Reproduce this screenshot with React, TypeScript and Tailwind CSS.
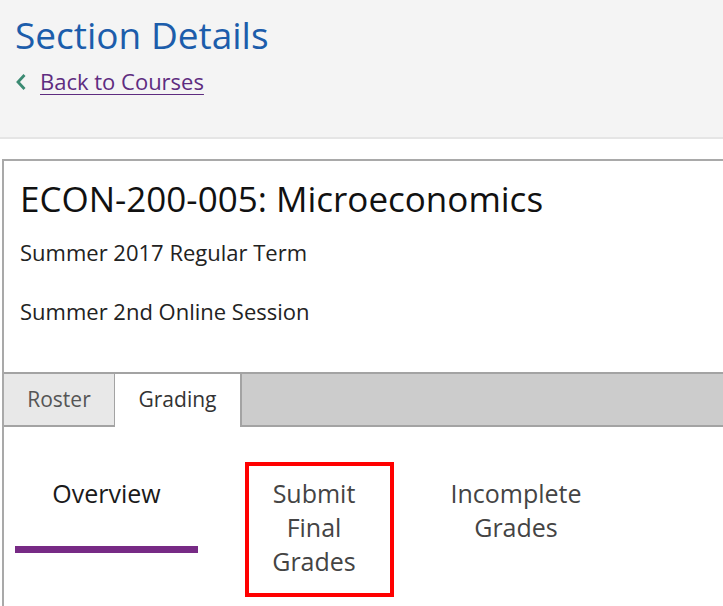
import React from 'react';

const subNav = [
    { label: ['Overview'], active: true, width: 'w-[183px]', ml: 'ml-[11px]' },
    { label: ['Submit', 'Final', 'Grades'], active: false, width: 'w-[232px]', ml: '', highlight: true },
    { label: ['Incomplete', 'Grades'], active: false, width: 'w-[172px]', ml: '' },
];

const App: React.FC = () => {
    return (
        <div className="w-[723px] h-[606px] overflow-hidden bg-white" style={{ fontFamily: '"Open Sans", "Noto Sans", sans-serif' }}>
            {/* page header */}
            <div className="h-[139px] bg-[#f4f4f4] border-b-2 border-[#e5e5e5] pl-[15px] pt-[10px]">
                <h1 className="text-[37px] leading-[50px] text-[#1c5dab]">Section Details</h1>
                <a href="#" className="mt-[7px] flex items-center gap-[13px] text-[22px] leading-[28px]">
                    <svg width="12" height="18" viewBox="0 0 12 18" className="mt-[2px]">
                        <path d="M9.5 2 L3 9 L9.5 16" fill="none" stroke="#3b8a72" strokeWidth="2.8" />
                    </svg>
                    <span className="text-[#5e2c80] underline decoration-1 underline-offset-4">Back to Courses</span>
                </a>
            </div>

            {/* section card */}
            <div className="mt-[20px] ml-[2px] w-[740px] border-2 border-[#a9a9a9]">
                <div className="pl-[16px] pt-[14px]">
                    <h2 className="text-[35px] leading-[48px] text-[#111]">ECON-200-005: Microeconomics</h2>
                    <p className="mt-[15px] text-[22px] leading-[28px] text-[#222]">Summer 2017 Regular Term</p>
                    <p className="mt-[31px] text-[22px] leading-[28px] text-[#222]">Summer 2nd Online Session</p>
                </div>

                {/* tabs */}
                <div className="mt-[47px] flex h-[55px] bg-[#cccccc] border-t-2 border-b-2 border-[#a3a3a3]">
                    <div className="w-[111px] h-[51px] bg-[#e8e8e8] border-r border-[#a3a3a3] flex justify-center text-[21px] leading-[51px] text-[#555]">
                        Roster
                    </div>
                    <div className="w-[127px] h-[53px] bg-white border-r-2 border-[#a3a3a3] flex justify-center text-[21px] leading-[51px] text-[#333]">
                        Grading
                    </div>
                </div>

                {/* grading sub nav */}
                <div className="flex pt-[49px] h-[300px]">
                    {subNav.map((item, i) => (
                        <div key={i} className={`relative flex flex-col items-center ${item.width} ${item.ml}`}>
                            {item.label.map((line) => (
                                <span key={line} className={`text-[25px] leading-[34px] ${item.active ? 'text-[#1a1a1a]' : 'text-[#444]'}`}>
                                    {line}
                                </span>
                            ))}
                            {item.active && <div className="mt-[36px] w-full h-[7px] bg-[#772a85]" />}
                            {item.highlight && (
                                <div className="absolute left-[47px] top-[-14px] w-[149px] h-[135px] border-4 border-[#ff0000]" />
                            )}
                        </div>
                    ))}
                </div>
            </div>
        </div>
    );
};

export default App;
